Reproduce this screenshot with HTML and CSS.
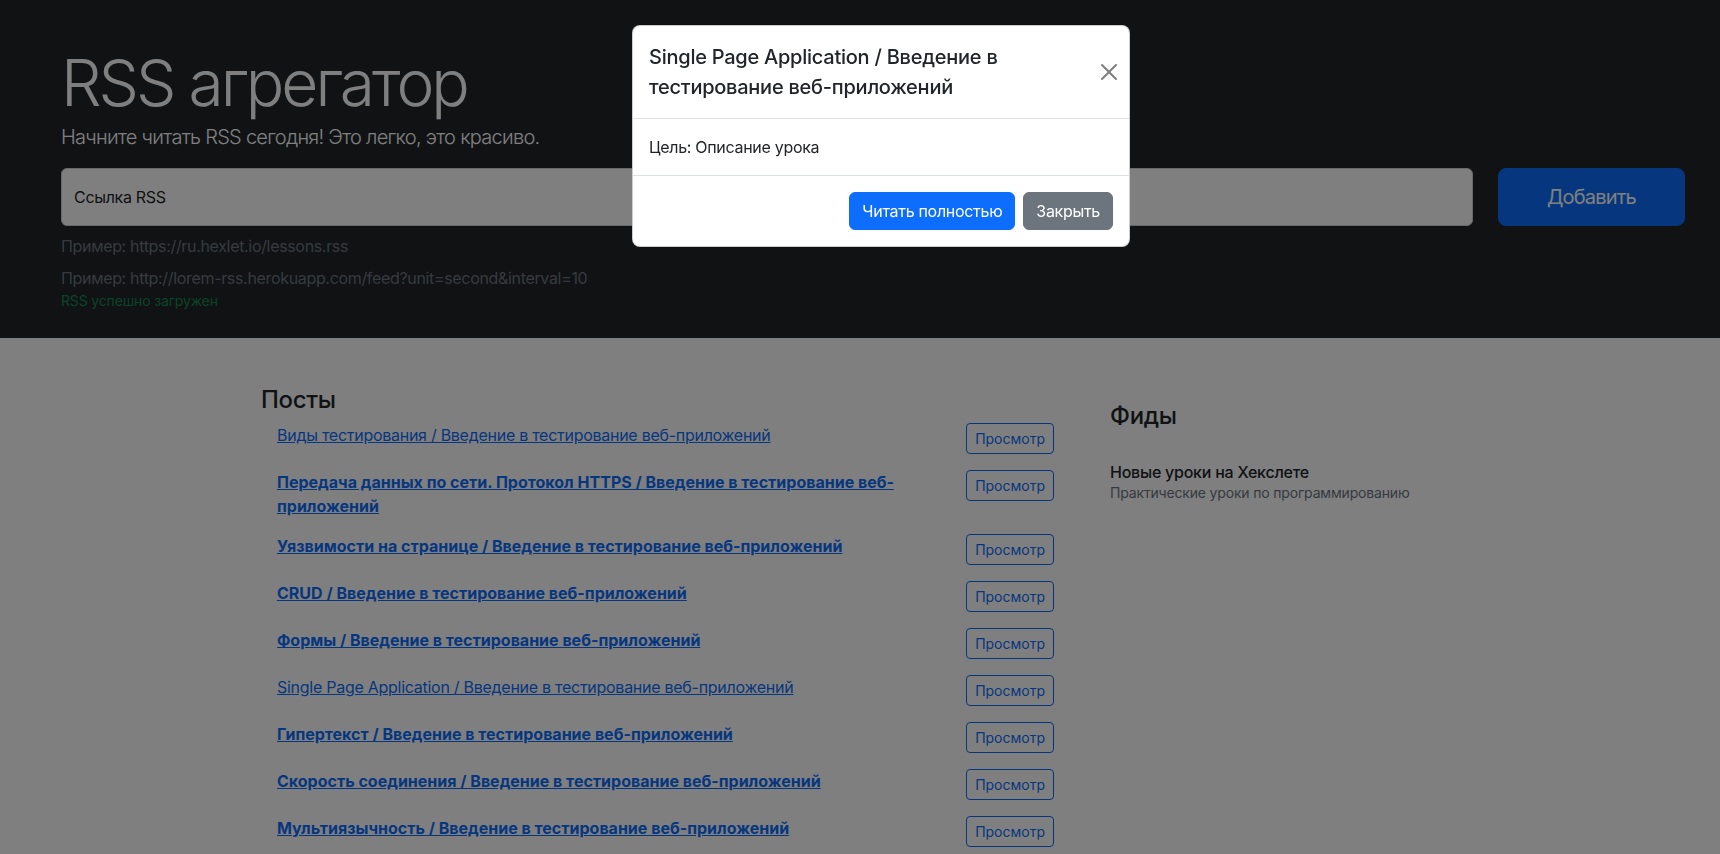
FILE: index.html
```html
<!DOCTYPE html>
<html lang="ru">
<head>
<meta charset="utf-8">
<title>RSS агрегатор</title>
<link rel="stylesheet" href="styles.css">
</head>
<body class="modal-open">
  <main class="page">
    <section class="hero">
      <h1 class="hero-title">RSS агрегатор</h1>
      <p class="hero-lead">Начните читать RSS сегодня! Это легко, это красиво.</p>
      <form class="rss-form">
        <div class="floating">
          <input class="url-input" id="url-input" type="text" aria-label="url" autocomplete="off">
          <label class="floating-label" for="url-input">Ссылка RSS</label>
        </div>
        <button type="button" class="btn-add">Добавить</button>
      </form>
      <p class="hint">Пример: https://ru.hexlet.io/lessons.rss</p>
      <p class="hint hint-second">Пример: http://lorem-rss.herokuapp.com/feed?unit=second&amp;interval=10</p>
      <p class="feedback">RSS успешно загружен</p>
    </section>

    <section class="content">
      <div class="posts">
        <h2 class="section-title">Посты</h2>
        <ul class="post-list">
          <li class="post-item"><a href="#" class="post-link">Виды тестирования / Введение в тестирование веб-приложений</a><button type="button" class="btn-view">Просмотр</button></li>
          <li class="post-item"><a href="#" class="post-link unread">Передача данных по сети. Протокол HTTPS / Введение в тестирование веб-приложений</a><button type="button" class="btn-view">Просмотр</button></li>
          <li class="post-item"><a href="#" class="post-link unread">Уязвимости на странице / Введение в тестирование веб-приложений</a><button type="button" class="btn-view">Просмотр</button></li>
          <li class="post-item"><a href="#" class="post-link unread">CRUD / Введение в тестирование веб-приложений</a><button type="button" class="btn-view">Просмотр</button></li>
          <li class="post-item"><a href="#" class="post-link unread">Формы / Введение в тестирование веб-приложений</a><button type="button" class="btn-view">Просмотр</button></li>
          <li class="post-item"><a href="#" class="post-link">Single Page Application / Введение в тестирование веб-приложений</a><button type="button" class="btn-view">Просмотр</button></li>
          <li class="post-item"><a href="#" class="post-link unread">Гипертекст / Введение в тестирование веб-приложений</a><button type="button" class="btn-view">Просмотр</button></li>
          <li class="post-item"><a href="#" class="post-link unread">Скорость соединения / Введение в тестирование веб-приложений</a><button type="button" class="btn-view">Просмотр</button></li>
          <li class="post-item"><a href="#" class="post-link unread">Мультиязычность / Введение в тестирование веб-приложений</a><button type="button" class="btn-view">Просмотр</button></li>
        </ul>
      </div>
      <div class="feeds">
        <div class="feeds-head">
          <h2 class="section-title">Фиды</h2>
        </div>
        <ul class="feed-list">
          <li class="feed-item">
            <h3 class="feed-title">Новые уроки на Хекслете</h3>
            <p class="feed-desc">Практические уроки по программированию</p>
          </li>
        </ul>
      </div>
    </section>
  </main>

  <div class="backdrop"></div>

  <div class="modal" role="dialog" aria-modal="true">
    <div class="modal-dialog">
      <div class="modal-header">
        <h5 class="modal-title">Single Page Application / Введение в тестирование веб-приложений</h5>
        <button type="button" class="btn-close" aria-label="Close">
          <svg viewBox="0 0 16 16" width="16" height="16" aria-hidden="true"><path d="M.293.293a1 1 0 0 1 1.414 0L8 6.586 14.293.293a1 1 0 1 1 1.414 1.414L9.414 8l6.293 6.293a1 1 0 0 1-1.414 1.414L8 9.414l-6.293 6.293a1 1 0 0 1-1.414-1.414L6.586 8 .293 1.707a1 1 0 0 1 0-1.414z" fill="#000"/></svg>
        </button>
      </div>
      <div class="modal-body">Цель: Описание урока</div>
      <div class="modal-footer">
        <a href="#" class="btn btn-primary">Читать полностью</a>
        <button type="button" class="btn btn-secondary">Закрыть</button>
      </div>
    </div>
  </div>
</body>
</html>
```

FILE: styles.css
```css
* { box-sizing: border-box; }

html, body {
  height: 100%;
}

body {
  margin: 0;
  overflow: hidden;
  font-family: Inter, "Noto Sans", "Liberation Sans", sans-serif;
  font-size: 16px;
  line-height: 1.5;
  letter-spacing: -0.3px;
  color: #212529;
  background: #fff;
}

/* ---------- hero ---------- */
.hero {
  background: #212529;
  color: #fff;
  padding: 45px 35px 27.2px 61px;
}

.hero-title {
  margin: 0;
  font-size: 64px;
  font-weight: 300;
  line-height: 1.2;
  letter-spacing: -3px;
}

.hero-lead {
  margin: 0 0 16px;
  font-size: 20px;
  font-weight: 300;
  line-height: 1.5;
  letter-spacing: -0.72px;
}

.rss-form {
  display: flex;
  gap: 25px;
  color: #212529;
}

.floating {
  position: relative;
  flex: 1;
}

.url-input {
  display: block;
  width: 100%;
  height: 58px;
  padding: 16px 12px;
  border: 1px solid #ced4da;
  border-radius: 6px;
  background: #fff;
  font: inherit;
  color: #212529;
}

.floating-label {
  position: absolute;
  top: 0;
  left: 0;
  padding: 16px 12px;
  border: 1px solid transparent;
  font-size: 16px;
  line-height: 1.5;
  color: #212529;
  pointer-events: none;
}

.btn-add {
  padding: 0 48px;
  border: 1px solid #0d6efd;
  border-radius: 8px;
  background: #0d6efd;
  color: #fff;
  font-family: inherit;
  font-size: 20px;
  line-height: 1.5;
  letter-spacing: -0.8px;
}

.hint {
  margin: 8px 0 0;
  color: #6c757d;
  font-size: 16px;
  line-height: 1.5;
  letter-spacing: -0.33px;
}

.hint-second {
  margin-top: 8px;
}

.feedback {
  margin: 0;
  color: #198754;
  font-size: 14px;
  line-height: 1.5;
  letter-spacing: -0.15px;
}

/* ---------- content ---------- */
.content {
  display: grid;
  grid-template-columns: 809px 392px;
  gap: 24px;
  padding: 48.5px 0 0 261px;
  align-items: start;
}

.section-title {
  margin: 0;
  font-size: 24px;
  font-weight: 500;
  line-height: 1.2;
  color: #212529;
  letter-spacing: -0.3px;
}

.post-list,
.feed-list {
  list-style: none;
  margin: 0;
  padding: 0;
}

.post-item {
  display: flex;
  justify-content: space-between;
  align-items: flex-start;
  padding: 8px 16px;
}

.post-link {
  color: #0d6efd;
  text-decoration: underline;
  font-weight: 400;
  letter-spacing: -0.27px;
}

.post-link.unread {
  font-weight: 700;
  letter-spacing: 0;
}

.btn-view {
  flex-shrink: 0;
  padding: 4px 8px;
  border: 1px solid #0d6efd;
  border-radius: 4px;
  background: transparent;
  color: #0d6efd;
  font-family: inherit;
  font-size: 14px;
  line-height: 1.5;
  letter-spacing: 0;
}

.feeds-head {
  padding: 16px;
}

.feeds-head .section-title {
  margin-bottom: 8px;
}

.feed-item {
  padding: 8px 16px;
}

.feed-title {
  margin: 0;
  font-size: 16px;
  font-weight: 500;
  line-height: 1.2;
  color: #212529;
  letter-spacing: -0.24px;
}

.feed-desc {
  margin: 0;
  font-size: 14px;
  line-height: 1.5;
  color: #6c757d;
  letter-spacing: -0.17px;
}

/* ---------- modal ---------- */
.backdrop {
  position: fixed;
  inset: 0;
  background: rgba(0, 0, 0, 0.5);
  z-index: 10;
}

.modal {
  position: fixed;
  inset: 0;
  z-index: 20;
}

.modal-dialog {
  width: 498px;
  margin: 25px 0 0 632px;
  background: #fff;
  border: 1px solid rgba(0, 0, 0, 0.2);
  border-radius: 8px;
  color: #212529;
}

.modal-header {
  display: flex;
  align-items: center;
  padding: 16px;
  border-bottom: 1px solid #dee2e6;
}

.modal-title {
  margin: 0;
  font-size: 20px;
  font-weight: 500;
  line-height: 1.5;
  letter-spacing: -0.25px;
}

.btn-close {
  flex-shrink: 0;
  display: flex;
  align-items: center;
  justify-content: center;
  width: 24px;
  height: 24px;
  margin: -8px -8px -8px auto;
  padding: 4px;
  border: 0;
  background: transparent;
  opacity: 0.5;
}

.btn-close svg {
  display: block;
}

.modal-body {
  padding: 16px;
}

.modal-footer {
  display: flex;
  justify-content: flex-end;
  align-items: center;
  padding: 12px;
  border-top: 1px solid #dee2e6;
}

.btn {
  display: inline-block;
  margin: 4px;
  padding: 6px 12px;
  border: 1px solid transparent;
  border-radius: 6px;
  font-family: inherit;
  font-size: 16px;
  font-weight: 400;
  line-height: 1.5;
  letter-spacing: -0.3px;
  text-decoration: none;
  color: #fff;
}

.btn-primary {
  background: #0d6efd;
  border-color: #0d6efd;
}

.btn-secondary {
  background: #6c757d;
  border-color: #6c757d;
}
```
